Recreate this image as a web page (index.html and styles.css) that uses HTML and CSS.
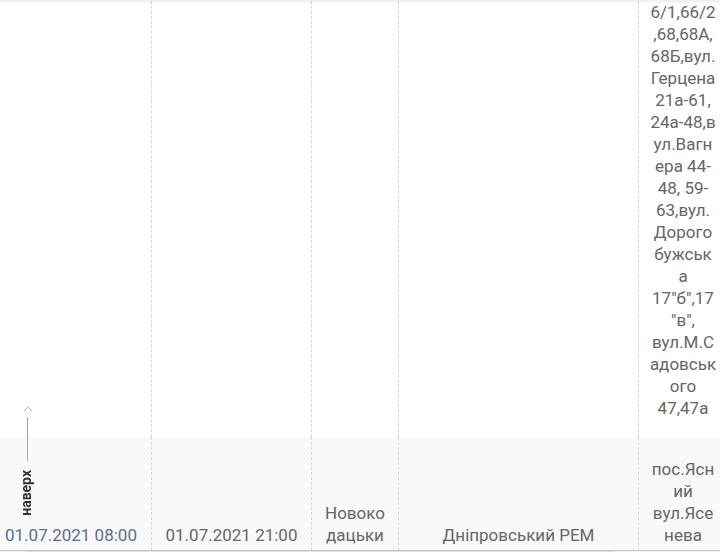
FILE: index.html
```html
<!DOCTYPE html>
<html lang="uk">
<head>
    <meta charset="UTF-8">
    <title>Графік відключень</title>
    <link rel="stylesheet" href="styles.css">
</head>
<body>
    <div class="shadow-top"></div>

    <div class="scroller">
        <table class="grid">
            <colgroup>
                <col class="c-start">
                <col class="c-end">
                <col class="c-town">
                <col class="c-rem">
                <col class="c-addr">
            </colgroup>
            <tr class="row-odd">
                <td></td>
                <td></td>
                <td></td>
                <td></td>
                <td class="addr">6/1,66/2<br>,68,68А,<br>68Б,вул.<br>Герцена<br>21а-61,<br>24а-48,в<br>ул.Вагн<br>ера 44-<br>48, 59-<br>63,вул.<br>Дорого<br>бужськ<br>а<br>17"б",17<br>"в",<br>вул.М.С<br>адовськ<br>ого<br>47,47а</td>
            </tr>
            <tr class="row-even">
                <td class="date first">01.07.2021 08:00</td>
                <td class="date">01.07.2021 21:00</td>
                <td>Новоко<br>дацьки</td>
                <td>Дніпровський РЕМ</td>
                <td class="addr">пос.Ясн<br>ий<br>вул.Ясе<br>нева</td>
            </tr>
        </table>
    </div>

    <div class="hscroll"><div class="thumb"></div></div>

    <a class="to-top" href="#">
        <svg width="10" height="7" viewBox="0 0 10 7"><polyline points="1,6.5 5,1.5 9,6.5" fill="none" stroke="#b5b5b5" stroke-width="1"/></svg>
        <span class="to-top-line"></span>
        <span class="to-top-text">наверх</span>
    </a>
</body>
</html>
```

FILE: styles.css
```css
* {
    box-sizing: border-box;
}

body {
    margin: 0;
    background: #fff;
    font-family: Roboto, "Liberation Sans", sans-serif;
    font-size: 17px;
    line-height: 22px;
    color: #666;
}

.scroller {
    height: 550px;
    overflow: hidden;
}

.grid {
    border-collapse: separate;
    border-spacing: 0;
    table-layout: fixed;
    width: 727px;
    margin-top: -19.5px;
}

.c-start { width: 152px; }
.c-end { width: 160px; }
.c-town { width: 87px; }
.c-rem { width: 240px; }
.c-addr { width: 88px; }

.grid td {
    text-align: center;
    padding: 0 4px;
    border-right: 1px dashed #d6d6d6;
}

.grid td:last-child {
    border-right: none;
}

.row-odd td {
    vertical-align: top;
    padding-top: 20px;
    padding-bottom: 18.5px;
}

.row-even td {
    vertical-align: bottom;
    background: #f9f9f9;
    padding-top: 21px;
    padding-bottom: 4px;
}

.grid td.first {
    text-align: left;
    padding-left: 5px;
    color: #5a6d92;
}

.shadow-top {
    position: fixed;
    top: 0;
    left: 0;
    right: 0;
    height: 4px;
    background: linear-gradient(rgba(0,0,0,0.07), rgba(0,0,0,0));
    z-index: 5;
}

.hscroll {
    height: 2px;
    border-top: 1px solid #c9c9c9;
    background: #f2f2f2;
    padding-left: 25px;
    padding-right: 105px;
}

.hscroll .thumb {
    height: 1px;
    background: #dcdcdc;
}

.to-top {
    position: fixed;
    left: 17px;
    top: 405px;
    width: 20px;
    display: flex;
    flex-direction: column;
    align-items: center;
    text-decoration: none;
    z-index: 10;
}

.to-top svg {
    display: block;
    margin-left: 1px;
}

.to-top-line {
    display: block;
    width: 1px;
    height: 44px;
    margin-top: 5px;
    margin-left: 1px;
    background: #a8a8a8;
}

.to-top-text {
    display: block;
    margin-top: 9px;
    writing-mode: vertical-rl;
    transform: rotate(180deg);
    font-size: 14px;
    line-height: 14px;
    font-weight: bold;
    color: #333;
    margin-left: -3px;
}
```
